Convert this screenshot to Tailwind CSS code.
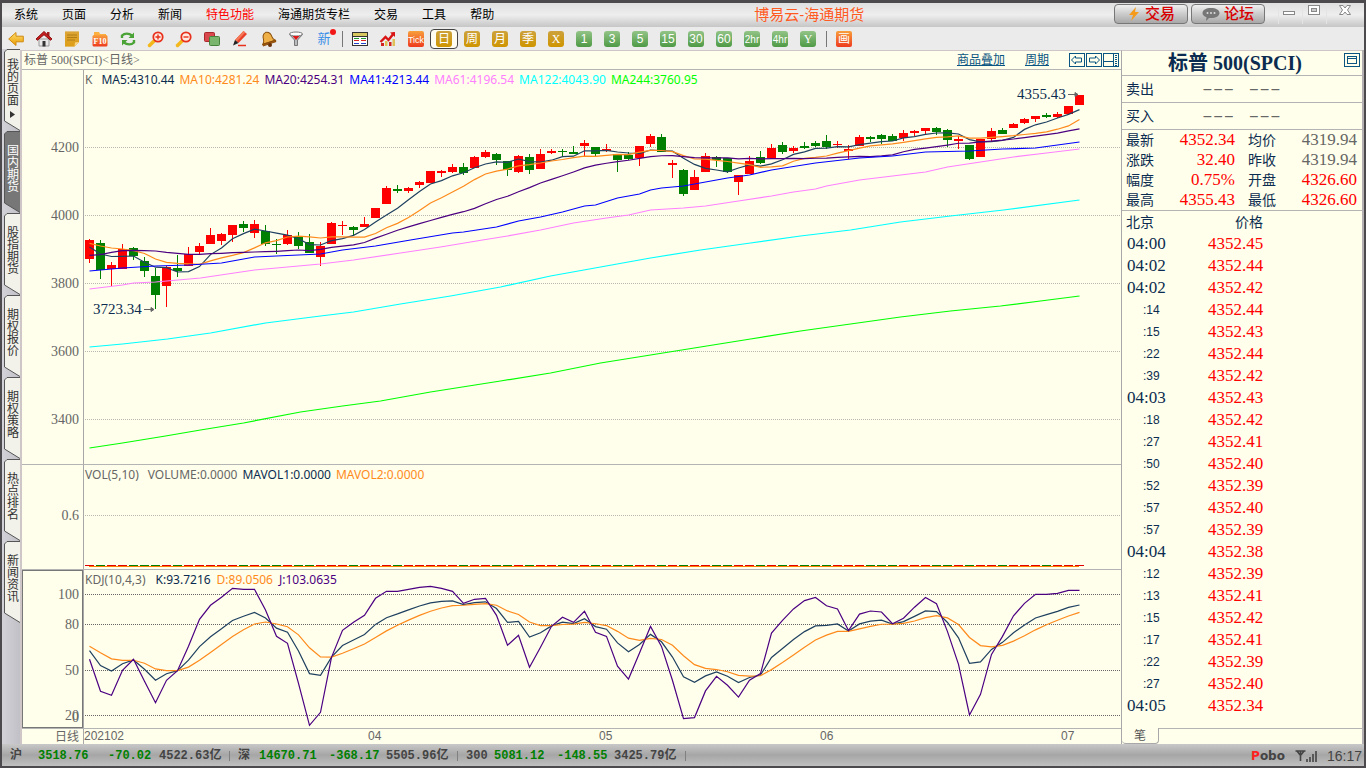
<!DOCTYPE html>
<html lang="zh-CN">
<head>
<meta charset="utf-8">
<title>博易云-海通期货</title>
<script src="https://cdn.jsdelivr.net/npm/@tailwindcss/browser@4"></script>
</head>
<body class="min-h-screen flex flex-col bg-[#c3c3c8] border-2 border-t-3 border-[#4c4a4c] font-['Liberation_Sans','Noto_Sans_CJK_SC',sans-serif] text-xs text-black">

<!-- Title and menu bar -->
<header class="h-6 flex items-center pr-0.5 bg-linear-to-b from-[#e0e0e0] via-[#eeeeee] to-[#c6c6c6] whitespace-nowrap">
  <nav class="flex flex-1 basis-0 [&>button]:px-3">
    <button>系统</button><button>页面</button><button>分析</button><button>新闻</button><button class="text-[#ff0000]">特色功能</button><button>海通期货专栏</button><button>交易</button><button>工具</button><button>帮助</button>
  </nav>
  <h1 class="text-[15px] text-[#ff5a1f] pl-62">博易云-海通期货</h1>
  <div class="flex flex-1 basis-0 items-center justify-end gap-[3px] text-[15px] font-medium text-[#d80000]">
    <button class="w-[74px] h-5 mb-0.5 flex items-center justify-center gap-1 rounded border border-[#777] bg-linear-to-b from-[#f0f0f0] to-[#a8a8a8]">
      <svg width="14" height="16" viewBox="0 0 14 16"><path d="M9 1 2 9h4l-2 6 8-9H8z" fill="#f59b1c"/></svg>交易</button>
    <button class="w-[74px] h-5 mb-0.5 flex items-center justify-center gap-1 rounded border border-[#777] bg-linear-to-b from-[#f0f0f0] to-[#a8a8a8]">
      <svg width="18" height="14" viewBox="0 0 18 14"><path d="M9 1c4.800 0 8.500 2 8.500 5S13.800 11 9 11H7l-3 3 .5-3.700C2 9.400.5 8 .5 6 .5 3 4.200 1 9 1z" fill="#777"/><g fill="#ddd"><circle cx="5.500" cy="6" r="1"/><circle cx="9" cy="6" r="1"/><circle cx="12.500" cy="6" r="1"/></g></svg>论坛</button>
    <div class="flex pl-2.5 pr-0 self-start">
      <button aria-label="最小化" class="w-6 h-5 border-l border-[#e4e4e4]"><svg width="24" height="20"><rect x="4.500" y="7.500" width="11" height="3" fill="#fff" stroke="#888"/></svg></button>
      <button aria-label="最大化" class="w-6 h-5 border-l border-[#e4e4e4]"><svg width="24" height="20"><rect x="5.500" y="1.500" width="11" height="9" fill="#fff" stroke="#888"/><rect x="8.500" y="4.500" width="5" height="3" fill="#ccc" stroke="#888"/></svg></button>
      <button aria-label="关闭" class="w-9 h-5 border-l border-[#e4e4e4]"><svg width="36" height="20"><path d="M12.500 1.500h3.500l2 2.500 2-2.500h3.500L20.500 6l3 4.500H20L18 8l-2 2.500h-3.500l3-4.500z" fill="#fff" stroke="#888"/></svg></button>
    </div>
  </div>
</header>

<!-- Tool bar -->
<div role="toolbar" class="h-[23px] flex items-center bg-[#ebebeb] text-[13px] [&>button]:w-7 [&>button]:h-5 [&>button]:flex [&>button]:items-center [&>button]:justify-center [&_svg]:overflow-visible">
  <svg width="0" height="0" class="absolute"><defs>
    <linearGradient id="gold" x2="0" y2="1"><stop stop-color="#cda23c"/><stop offset="1" stop-color="#cf9500"/></linearGradient>
    <linearGradient id="green" x2="0" y2="1"><stop stop-color="#93c487"/><stop offset="1" stop-color="#4e9a45"/></linearGradient>
    <linearGradient id="hot" x2="0" y2="1"><stop stop-color="#f8a03c"/><stop offset="1" stop-color="#ee3a1e"/></linearGradient>
    <linearGradient id="sun" x2="0" y2="1"><stop stop-color="#ffe070"/><stop offset="1" stop-color="#e89a00"/></linearGradient>
  </defs></svg>
  <button aria-label="后退"><svg width="16" height="16"><path d="M.7 8 8 1.500v3.700h7.300v5.600H8v3.700z" fill="url(#sun)" stroke="#d08a10"/></svg></button>
  <button aria-label="首页"><svg width="16" height="16"><path d="M3 8h10v7H3z" fill="#e8e8e8" stroke="#999"/><path d="M11 1h2.500v4H11z" fill="#a02020"/><path d="M8 .5 16 8l-1.500 1.200L8 3.700 1.500 9.200 0 8z" fill="#c81e1e" stroke="#8d1010"/><path d="M6.500 10h3v5.500h-3z" fill="#333"/></svg></button>
  <button aria-label="记事"><svg width="16" height="16"><path d="M1 .5h14V11l-4.500 4.500H1z" fill="url(#gold)"/><path d="M1 .5h14V11l-4.500 4.500H1z" fill="#f0a830" opacity=".45"/><path d="m10.500 15.500.5-4 4-.5z" fill="#fbd98a"/><path d="M3 4h10M3 6.500h10M3 9h8" stroke="#b07c18"/></svg></button>
  <button aria-label="F10"><svg width="16" height="16"><path d="M2 1h5l1 2h6v4H2z" fill="#fbb040"/><rect x=".5" y="4" width="15" height="11.500" rx="1.500" fill="url(#hot)"/><text x="8" y="13" font-size="8" font-weight="700" fill="#fff" text-anchor="middle" font-family="Liberation Serif,serif">F10</text></svg></button>
  <button aria-label="刷新"><svg width="16" height="16" fill="none"><path d="M2 7V4.500C4.500 2 9 2 12 4.500M14 9v2.500C11.500 14 7 14 4 11.500" stroke="#4aa336" stroke-width="2.400"/><path d="M14 1.500V7H8.500zM2 14.500V9h5.500z" fill="#4aa336"/></svg></button>
  <button aria-label="放大"><svg width="16" height="16"><path d="m1.500 14.500 5-5" stroke="#f2b81c" stroke-width="3.500" stroke-linecap="round"/><circle cx="10" cy="6" r="4.700" fill="#ffe9e0" stroke="#e8311c" stroke-width="1.800"/><path d="M7.500 6h5M10 3.500v5" stroke="#e8311c" stroke-width="1.400"/></svg></button>
  <button aria-label="缩小"><svg width="16" height="16"><path d="m1.500 14.500 5-5" stroke="#f2b81c" stroke-width="3.500" stroke-linecap="round"/><circle cx="10" cy="6" r="4.700" fill="#ffe9e0" stroke="#e8311c" stroke-width="1.800"/><path d="M7.500 6h5" stroke="#e8311c" stroke-width="1.400"/></svg></button>
  <button aria-label="叠加"><svg width="16" height="16"><rect x=".5" y="1.500" width="10" height="9" rx="1" fill="#d9484c" stroke="#a8282c"/><rect x="5.500" y="5.500" width="10" height="9" rx="1" fill="#7ab56e" stroke="#46823c"/></svg></button>
  <button aria-label="画线"><svg width="16" height="16"><path d="M11.500 0 15 3 6.500 12 3 9z" fill="#e8402a"/><path d="m11.500 0 1.700 1.500L4.800 10.500 3 9z" fill="#f47a5a"/><path d="M3 9 6.500 12 1 14.500z" fill="#222"/><path d="M6 14.500h8" stroke="#e8311c" stroke-width="1.500"/></svg></button>
  <button aria-label="预警"><svg width="16" height="16"><g transform="rotate(-18 8 8)"><path d="M8 1c3.500.5 4.500 3.500 4.500 6.500 0 2 1 3 2 4H1.500c1-1 2-2 2-4C3.500 4.500 4.500 1.500 8 1z" fill="#f0b048" stroke="#8a4e08"/><path d="M1.500 11.500h13v1.500h-13z" fill="#a85818" stroke="#8a4e08"/></g><circle cx="10" cy="14" r="2" fill="#6a3208"/></svg></button>
  <button aria-label="筛选"><svg width="16" height="16"><path d="M1.500 3.500 6.500 9v5.500h3V9l5-5.500z" fill="#b9bcbf" stroke="#777"/><ellipse cx="8" cy="3" rx="6.500" ry="2" fill="#fff" stroke="#777"/><path d="M4.500 5h7L8 9z" fill="#e01818"/></svg></button>
  <button class="relative text-[#3b8fe8]">新<i class="absolute right-0.5 top-0 w-[6px] h-[6px] rounded-full bg-[#f21818]"></i></button>
  <span class="w-2 flex justify-center"><i class="w-px h-4 bg-[#777]"></i></span>
  <button aria-label="报价"><svg width="16" height="16" shape-rendering="crispEdges"><rect x=".5" y="1.500" width="15" height="13" fill="#fff" stroke="#333"/><path d="M1 3.500h14" stroke="#d8c860" stroke-width="3"/><path d="M1 5.500h14" stroke="#333"/><path d="M2 7.500h5m2 0h5" stroke="#1e9a2e"/><path d="M2 9.500h5m2 0h5" stroke="#d22"/><path d="M2 12.500h5m2 0h5" stroke="#24c"/></svg></button>
  <button aria-label="走势"><svg width="16" height="16"><path d="M1 12h3v3H1zM9 11h2.500v4H9z" fill="#d02020"/><path d="M5 10h2.500v5H5zM12.500 8H15v7h-2.500z" fill="#e0c058"/><path d="m.5 11 5-5 3 3L14 2" fill="none" stroke="#d81414" stroke-width="2.400"/><path d="m10 1.500 5-.5v5z" fill="#d81414"/></svg></button>
  <button aria-label="Tick"><svg width="16" height="16"><rect width="16" height="16" rx="2" fill="url(#hot)"/><text x="8" y="12" font-size="9" fill="#fff" text-anchor="middle" font-family="Liberation Sans,sans-serif">Tick</text></svg></button>
  <span id="periods" class="contents"></span>
  <span class="w-2 flex justify-center"><i class="w-px h-4 bg-[#777]"></i></span>
  <button aria-label="画"><svg width="16" height="16"><rect width="16" height="16" rx="2" fill="url(#hot)"/><text x="8" y="12" font-size="12" fill="#fff" text-anchor="middle" font-family="Noto Sans CJK SC,sans-serif">画</text></svg></button>
</div>

<div class="flex-1 flex border-r-2 border-[#b4b0b2]">
  <!-- Side tabs -->
  <nav id="tabs" class="w-[18px] pl-0.5 -mt-px bg-linear-to-r from-[#d2d2d8] to-[#c0c0c6]"></nav>

  <!-- Charts -->
  <main class="flex-1 min-w-0 flex flex-col bg-[#ffffeb] border-l-2 border-t border-[#cfc6c8]">
    <div class="h-[19px] flex items-center border-b border-[#b4b4b4] text-[#666] pl-0.5 pr-0.5 whitespace-nowrap">
      <h2 class="flex-1 font-['Liberation_Serif','Noto_Sans_CJK_SC',serif]">标普 500(SPCI)&lt;日线&gt;</h2>
      <a href="#" class="text-[#0a5582] underline mr-5">商品叠加</a>
      <a href="#" class="text-[#0a5582] underline mr-5">周期</a>
      <button aria-label="前移"><svg width="17" height="14" fill="none" stroke="#0a5582" shape-rendering="crispEdges"><path d="M.5.5h15v13H.5z"/><path d="m2.500 7 4-4v2h6v4h-6v2z" shape-rendering="auto"/></svg></button>
      <button aria-label="后移"><svg width="17" height="14" fill="none" stroke="#0a5582" shape-rendering="crispEdges"><path d="M.5.5h15v13H.5z"/><path d="m13.500 7-4-4v2h-6v4h6v2z" shape-rendering="auto"/></svg></button>
      <button aria-label="布局"><svg width="16" height="14" fill="none" stroke="#0a5582" shape-rendering="crispEdges"><path d="M.5.5h15v13H.5zM10.500 1v12M1 8.500h9"/><path d="M13 2v11" stroke-dasharray="1 1" stroke-width="2"/></svg></button>
    </div>

    <section class="relative border-b border-[#b4b4b4] font-['Noto_Sans',sans-serif]">
      <p class="absolute left-[63px] top-0 leading-5 flex gap-[5px] whitespace-nowrap text-[#666]"><span class="mr-1">K</span><span class="text-[#0b2c50]">MA5:4310.44</span><span class="text-[#ff8a1c]">MA10:4281.24</span><span class="text-[#4b0082]">MA20:4254.31</span><span class="text-[#0000ff]">MA41:4213.44</span><span class="text-[#ff80ff]">MA61:4196.54</span><span class="text-[#00ffff]">MA122:4043.90</span><span class="text-[#00ff00]">MA244:3760.95</span></p>
      <svg id="price" class="block w-full h-[394px]"></svg>
    </section>
    <section class="relative border-b border-[#b4b4b4] font-['Noto_Sans',sans-serif]">
      <p class="absolute left-[63px] top-0 leading-5 flex gap-[5px] whitespace-nowrap text-[#666]"><span class="mr-1">VOL(5,10)</span><span>VOLUME:0.0000</span><span class="text-[#0b2c50]">MAVOL1:0.0000</span><span class="text-[#ff8a1c]">MAVOL2:0.0000</span></p>
      <svg id="volume" class="block w-full h-[104px]"></svg>
    </section>
    <section class="relative border-b border-[#b4b4b4] font-['Noto_Sans',sans-serif]">
      <p class="absolute left-[63px] top-0 leading-5 flex gap-[6px] whitespace-nowrap text-[#666]"><span class="mr-1">KDJ(10,4,3)</span><span class="text-[#0b2c50]">K:93.7216</span><span class="text-[#ff8a1c]">D:89.0506</span><span class="text-[#4b0082]">J:103.0635</span></p>
      <svg id="kdj" class="block w-full h-[158px]"></svg>
    </section>
    <svg id="dates" class="block w-full h-[15px]"></svg>
  </main>

  <!-- Quote panel -->
  <aside class="w-[241px] flex flex-col bg-[#ffffeb] border-l border-t border-t-[#cfc6c8] border-l-[#a8a8a8] text-sm text-[#0b2c50]">
    <div class="h-[25px] relative flex items-center justify-center border-b border-[#b4b4b4] pr-3.5 font-['Liberation_Serif','Noto_Sans_CJK_SC',serif] text-xl font-bold leading-6">标普 500(SPCI)
      <button aria-label="还原" class="absolute right-0.5 top-0.5"><svg width="16" height="14" fill="none" stroke="#0a5582" shape-rendering="crispEdges"><path d="M.5.500h15v13H.5zM3.500 3.500h9v7h-9zM3 5.500h10"/></svg></button>
    </div>
    <div class="h-[27px] flex items-center border-b border-[#b4b4b4] pl-1"><span class="w-[76px]">卖出</span><span class="font-['Liberation_Mono',monospace] text-lg text-[#666] flex gap-3.5"><i class="not-italic">–––</i><i class="not-italic">–––</i></span></div>
    <div class="h-[27px] flex items-center border-b border-[#b4b4b4] pl-1"><span class="w-[76px]">买入</span><span class="font-['Liberation_Mono',monospace] text-lg text-[#666] flex gap-3.5"><i class="not-italic">–––</i><i class="not-italic">–––</i></span></div>
    <table class="border-b border-[#b4b4b4] table-fixed w-full [&_tr]:h-5 [&_td]:p-0 [&_th]:p-0 [&_th]:text-left [&_th]:font-normal [&_th]:leading-5 [&_td]:leading-5 [&_td]:text-right [&_td]:text-[17px] [&_td]:text-[#ff0000] [&_td]:font-['Liberation_Serif',serif]">
      <colgroup><col class="w-10"><col class="w-[73px]"><col><col class="w-[77px]"><col class="w-[5px]"></colgroup>
      <tbody>
      <tr><th class="pl-1!">最新</th><td>4352.34</td><th class="pl-[13px]!">均价</th><td class="text-[#666]!">4319.94</td><td></td></tr>
      <tr><th class="pl-1!">涨跌</th><td>32.40</td><th class="pl-[13px]!">昨收</th><td class="text-[#666]!">4319.94</td><td></td></tr>
      <tr><th class="pl-1!">幅度</th><td>0.75%</td><th class="pl-[13px]!">开盘</th><td>4326.60</td><td></td></tr>
      <tr><th class="pl-1!">最高</th><td>4355.43</td><th class="pl-[13px]!">最低</th><td>4326.60</td><td></td></tr>
      </tbody>
    </table>
    <table class="table-fixed w-full [&_tr]:h-[22px] [&_td]:p-0 [&_td]:leading-5 [&_th]:p-0 [&_th]:text-left [&_th]:font-normal">
      <colgroup><col class="w-[86px]"><col></colgroup>
      <thead><tr><th class="pl-1!">北京</th><th class="pl-[27px]!">价格</th></tr></thead>
      <tbody id="ticks"></tbody>
    </table>
    <div class="mt-auto flex h-4">
      <button class="w-[37px] text-xs leading-4 text-[#555] border-r border-b border-[#a8a8a8] rounded-b">笔</button>
      <i class="flex-1 border-t border-[#b4b4b4]"></i>
    </div>
  </aside>
</div>

<!-- Status bar -->
<footer class="h-[22px] pt-0.5 flex items-center pl-2 bg-linear-to-b from-[#c8c8c8] via-[#a6a6a6] to-[#c0c0c0] font-['Liberation_Mono','Noto_Sans_CJK_SC',monospace] font-bold text-[#444] whitespace-nowrap">
  <span class="w-7">沪</span><span class="w-[70px] text-[#008000]">3518.76</span><span class="w-[51px] text-[#008000]">-70.02</span><span class="w-[70px]">4522.63亿</span><i class="w-px h-2.5 mr-2 bg-[#808080]"></i>
  <span class="w-[21px]">深</span><span class="w-[70px] text-[#008000]">14670.71</span><span class="w-[57px] text-[#008000]">-368.17</span><span class="w-[71px]">5505.96亿</span><i class="w-px h-2.5 mr-2 bg-[#808080]"></i>
  <span class="w-7">300</span><span class="w-[63px] text-[#008000]">5081.12</span><span class="w-[57px] text-[#008000]">-148.55</span><span class="w-[71px]">3425.79亿</span><i class="w-px h-2.5 bg-[#808080]"></i>
  <span class="ml-auto mr-2.5 text-xs font-['DejaVu_Sans',sans-serif]"><b class="text-[#ff2020]">P</b>obo</span>
  <svg width="22" height="12" class="mr-2.5" fill="none" stroke="#444"><path d="M.5 1h10M2 1l3.500 4.500L9 1M5.500 1v10M12 9v3M15 7v5M18 4v8M21 1v11" stroke-width="1.600"/></svg>
  <time class="text-sm font-normal font-['Liberation_Sans',sans-serif] pr-0.5">16:17</time>
</footer>

<script>
const NS = 'http://www.w3.org/2000/svg';
const STEP = 11, FIRST = 67.5;
const px = i => FIRST + STEP * i;

function add(svg, name, attrs, text) {
  const el = document.createElementNS(NS, name);
  for (const k in attrs) el.setAttribute(k, attrs[k]);
  if (text !== undefined) el.textContent = text;
  svg.appendChild(el);
  return el;
}
const line = (svg, pts, stroke) => add(svg, 'polyline', { points: pts.map(p => p.join(',')).join(' '), fill: 'none', stroke, 'stroke-width': 1.200 });
const serif = 'Liberation Serif,serif';

function axis(svg, ticks, color) {
  add(svg, 'line', { x1: 61.5, x2: 61.5, y1: 0, y2: '100%', stroke: '#a8a8a8' });
  for (const [label, y] of ticks) {
    add(svg, 'line', { x1: 63, x2: '100%', y1: y + .5, y2: y + .5, stroke: color, 'stroke-dasharray': '1 1', 'shape-rendering': 'crispEdges' });
    add(svg, 'text', { x: 57, y: y + 5, 'text-anchor': 'end', 'font-size': 14, 'font-family': serif, fill: '#666' }, label);
  }
}

// Candles: high, body top, body bottom, low, rising flag
const candles = [
[239,240,259,263,1],[240,243,270,279,0],[262,265,269,286,1],[244,249,269,269,1],[247,248,256,260,0],[257,261,271,277,0],[268,276,295,309,0],[266,267,286,307,1],[255,268,271,277,0],[247,254,266,266,1],
[243,246,252,254,1],[228,235,244,244,1],[233,234,241,245,1],[225,225,235,242,1],[221,224,228,232,0],[220,224,233,238,1],[225,231,244,246,0],[239,244,245,254,0],[230,235,244,245,1],[232,236,246,249,0],
[234,242,253,253,0],[242,246,257,266,1],[222,223,244,244,1],[221,225,226,235,1],[226,227,230,235,0],[217,224,227,227,1],[208,208,218,218,1],[186,188,204,204,1],[185,189,191,193,0],[187,188,191,193,1],
[181,182,185,188,1],[171,171,183,183,1],[170,171,173,177,1],[164,167,172,173,1],[163,167,173,175,0],[156,157,168,168,1],[150,152,157,158,1],[153,154,160,165,0],[161,161,170,176,0],[155,156,172,173,1],
[154,157,170,174,0],[149,154,169,169,1],[149,151,153,154,1],[149,151,152,157,0],[146,152,154,154,0],[140,143,146,156,1],[147,147,154,156,0],[144,149,151,152,1],[154,154,160,172,0],[152,155,159,160,0],
[146,146,158,166,1],[134,136,144,147,1],[134,137,152,152,0],[160,163,165,178,1],[169,170,194,196,0],[170,177,190,190,1],[153,156,172,172,1],[156,157,160,167,0],[158,158,172,173,0],[175,175,182,195,1],
[156,161,174,174,1],[151,157,163,164,0],[144,148,158,158,1],[142,145,152,154,0],[146,148,151,153,1],[142,146,148,149,0],[141,143,146,147,0],[135,141,147,149,0],[141,144,145,148,1],[145,149,151,159,1],
[135,137,146,146,1],[136,137,139,142,0],[134,135,139,144,0],[134,136,141,141,0],[130,133,138,141,1],[130,131,133,136,1],[128,128,131,135,1],[127,128,132,135,0],[129,130,140,147,0],[136,139,141,149,1],
[145,145,159,160,0],[139,139,157,157,1],[128,131,139,141,1],[128,130,134,134,0],[123,124,128,128,1],[118,119,123,124,1],[116,116,119,122,1],[113,115,117,118,0],[112,114,117,118,1],[106,106,114,114,1],[95,95,105,105,1]];
const TOP = 70;
const price = document.getElementById('price');
axis(price, [['4200', 77], ['4000', 145], ['3800', 213], ['3600', 281], ['3400', 349]], '#b8b8b0');
candles.forEach(([h, t, b, l, up], i) => {
  const fill = up ? '#ff0000' : '#008000', x = px(i) - .5;
  add(price, 'rect', { x, y: h - TOP, width: 1, height: l - h, fill, 'shape-rendering': 'crispEdges' });
  add(price, 'rect', { x: x - 4, y: t - TOP, width: 9, height: b - t, fill, 'shape-rendering': 'crispEdges' });
});
const close = candles.map(c => c[4] ? c[1] : c[2]);
// Moving average; "head" holds the values of the days whose window starts before the first candle
const ma = (n, head) => close.map((_, i) => [px(i), (i < head.length ? head[i] : close.slice(i - n + 1, i + 1).reduce((a, b) => a + b) / n) - TOP]);
line(price, ma(5, [247, 254, 256.5, 256.3]), '#1f4060');
line(price, ma(10, [243.3, 246, 248, 249, 250.7, 253.5, 259, 262.3, 263.3]), '#ff8a1c');
line(price, ma(20, [255.3, 254.7, 252.3, 250.7, 250.3, 250.7, 251, 252.3, 253.3, 254.3, 254.3, 253.7, 253.3, 252.7, 252.3, 252, 251.7, 251.3, 250.7]), '#4b0082');
const slow = (pts, color) => line(price, pts.map(([x, y]) => [x - 21.5, y - TOP]), color);
slow([[89,271],[122,268],[155,266],[188,265],[221,263],[232,261],[254,257],[276,256],[320,254],[342,250],[375,246],[410,240],[452,233],[463,232],[496,227],[518,221],[540,217],[562,212],[584,206],[595,205],[617,198],[639,194],[650,190],[661,188],[683,186],[694,184],[727,178],[749,175],[771,170],[815,163],[859,158],[892,156],[925,152],[969,151],[1002,149],[1035,148],[1079,142]], '#0000ff');
slow([[89,289],[122,285],[133,283],[155,282],[200,278],[254,270],[287,267],[320,264],[353,260],[400,253],[440,247],[482,240],[507,236],[540,230],[573,223],[606,218],[628,215],[650,210],[683,208],[705,206],[738,201],[771,196],[793,192],[815,189],[826,186],[859,180],[892,176],[925,172],[947,167],[980,162],[1013,157],[1046,153],[1079,149]], '#ff80ff');
slow([[89,347],[122,344],[167,339],[210,333],[265,323],[320,316],[353,312],[400,304],[450,296],[500,287],[550,276],[600,267],[650,258],[700,250],[750,243],[800,236],[850,230],[900,222],[950,216],[1003,210],[1079,200]], '#00ffff');
slow([[89,448],[122,443],[165,436],[200,430],[243,423],[300,412],[342,406],[380,401],[430,392],[500,381],[550,373],[600,363],[650,355],[700,347],[750,339],[800,331],[850,324],[900,317],[950,311],[1000,306],[1040,301],[1079,296]], '#00ff00');
const note = (x, y, t) => {
  add(price, 'text', { x, y, 'font-size': 15, 'font-family': serif, fill: '#0b2c50' }, t);
  add(price, 'path', { d: `M${x + 51} ${y - 4.5}h10m-3-2 3 2-3 2z`, stroke: '#666', fill: '#666' });
};
note(71, 244, '3723.34');
note(995, 29, '4355.43');

const volume = document.getElementById('volume');
axis(volume, [['0.6', 50]], '#b8b8b0');
candles.forEach((c, i) => add(volume, 'rect', { x: px(i) - 4.5, y: 100, width: 9, height: 1, fill: c[4] ? '#e00000' : '#008000', 'shape-rendering': 'crispEdges' }));
add(volume, 'rect', { x: 67, y: 101, width: 990, height: 1, fill: '#ff8000' });

const kdj = document.getElementById('kdj');
axis(kdj, [['100', 24], ['80', 54], ['50', 100], ['20', 145]], '#666');
add(kdj, 'text', { x: 57, y: 152, 'text-anchor': 'end', 'font-size': 14, 'font-family': serif, fill: '#666' }, '0');
add(kdj, 'rect', { x: .5, y: .5, width: 60, height: 157, fill: 'none', stroke: '#777' });
const J = [89.3,121.3,125.3,100.3,89.3,111.3,132.7,110.3,100.7,76.3,49.3,35.3,27.3,18.3,19.3,19.3,40,66.3,73.3,113.3,155.3,142.3,87.3,60.3,52.3,45.3,28.3,21.3,21.3,19.3,17.3,16.3,18.3,21.3,33.3,29.3,28.3,45.3,75.3,65.3,97.3,77.3,56.3,47.3,52.3,41.3,62.3,66.4,96.1,109.1,83,56.5,76.4,110.5,148.6,147.6,120.9,106.4,115.3,127.1,110.2,103.6,63,50.3,38.9,30.6,27.5,35.8,38.9,60.6,44.1,41,42,53.7,48.2,37.2,27.5,33.7,61.6,94.3,145,124.3,84.4,66.4,45.8,33.4,24.4,24.4,23.4,20.3,20.3];
// D is the smoothed K and J = 3K - 2D, so both follow from J
const D = [76.3];
for (let i = 1; i < J.length; i++) D[i] = (6 * D[i - 1] + J[i]) / 7;
const K = J.map((j, i) => (j + 2 * D[i]) / 3);
line(kdj, K.map((v, i) => [px(i), v]), '#1f4060');
line(kdj, D.map((v, i) => [px(i), v]), '#ff8a1c');
line(kdj, J.map((v, i) => [px(i), v]), '#4b0082');

const dates = document.getElementById('dates');
add(dates, 'line', { x1: 61.5, x2: 61.5, y1: 0, y2: 15, stroke: '#a8a8a8' });
for (const [x, t] of [[62, '202102'], [346, '04'], [577, '05'], [798, '06'], [1039, '07']])
  add(dates, 'text', { x, y: 11, 'font-size': 12, 'font-family': 'Liberation Sans,sans-serif', fill: '#666' }, t);
add(dates, 'text', { x: 57, y: 12, 'text-anchor': 'end', 'font-size': 12, 'font-family': 'Noto Sans CJK SC,sans-serif', fill: '#666' }, '日线');

document.getElementById('periods').outerHTML = ['日','周','月','季','X','1','3','5','15','30','60','2hr','4hr','Y'].map((t, i) => {
  const size = t.length > 2 ? 10 : 12;
  const font = i < 4 ? 'Noto Sans CJK SC,sans-serif' : i === 4 || i === 13 ? 'Liberation Serif,serif' : 'Liberation Sans,sans-serif';
  return `<button class="${i ? '' : 'bg-[#fffdf2] border border-[#444] rounded'}"><svg width="16" height="16"><rect width="16" height="16" rx="3" fill="url(#${i < 5 ? 'gold' : 'green'})"/><text x="8" y="12" font-size="${size}" fill="#fff" text-anchor="middle" font-family="${font}">${t}</text></svg></button>`;
}).join('');

document.getElementById('tabs').innerHTML = ['我的页面','国内期货','股指期货','期权报价','期权策略','热点排名','新闻资讯'].map((t, i) => `
  <button class="relative flex flex-col items-start justify-start w-4 h-[82px] leading-3 ${i ? 'pt-3.5' : 'pt-2.5'} ${i === 1 ? 'text-white' : 'text-[#333]'}">
    <svg class="absolute left-0 top-0" width="16" height="82"><path d="M16 .5H3L.500 3V72L16 81.500" fill="${i === 1 ? '#777' : '#f2f1ea'}" stroke="#555"/></svg>
    <span class="relative block w-3 ml-[3px] break-all">${t}</span>${i ? '' : '<svg class="relative mt-1 ml-1.5" width="5" height="7"><path d="M0 0 5 3.500 0 7z" fill="#333"/></svg>'}
  </button>`).join('');

document.getElementById('ticks').innerHTML = [['04:00',45],['04:02',44],['04:02',42],[':14',44],[':15',43],[':22',44],[':39',42],['04:03',43],[':18',42],[':27',41],[':50',40],[':52',39],[':57',40],[':57',39],['04:04',38],[':12',39],[':13',41],[':15',42],[':17',41],[':22',39],[':27',40],['04:05',34]].map(([t, c]) =>
  `<tr><td class="${t.length > 3 ? "pl-[5px]! text-[17px] font-['Liberation_Serif',serif]" : 'pl-[21px]! text-xs'}">${t}</td><td class="text-[17px] text-[#ff0000] font-['Liberation_Serif',serif]">4352.${c}</td></tr>`).join('');
</script>
</body>
</html>
